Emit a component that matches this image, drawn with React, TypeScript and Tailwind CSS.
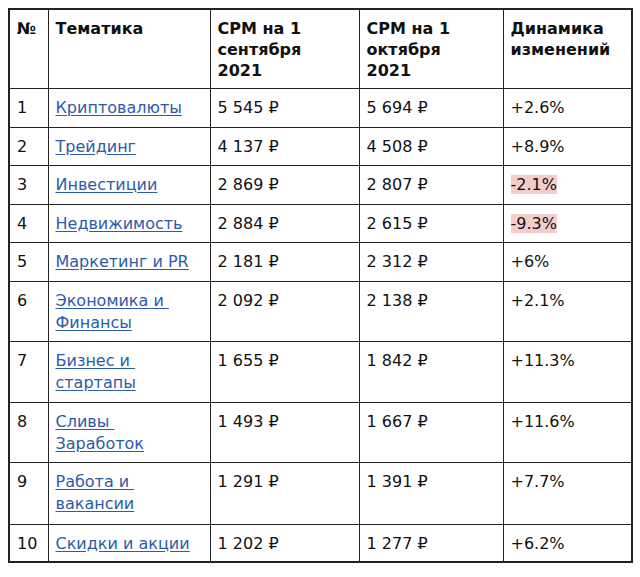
import React from 'react'

interface Row {
  n: number
  topic: string[]
  sep: string
  oct: string
  delta: string
  h: string
  negative?: boolean
}

// CPM by topic, Sep vs Oct 2021
const ROWS: Row[] = [
  { n: 1, topic: ['Криптовалюты'], sep: '5 545 ₽', oct: '5 694 ₽', delta: '+2.6%', h: 'h-[39px]' },
  { n: 2, topic: ['Трейдинг'], sep: '4 137 ₽', oct: '4 508 ₽', delta: '+8.9%', h: 'h-[38px]' },
  { n: 3, topic: ['Инвестиции'], sep: '2 869 ₽', oct: '2 807 ₽', delta: '-2.1%', h: 'h-[39px]', negative: true },
  { n: 4, topic: ['Недвижимость'], sep: '2 884 ₽', oct: '2 615 ₽', delta: '-9.3%', h: 'h-[38px]', negative: true },
  { n: 5, topic: ['Маркетинг и PR'], sep: '2 181 ₽', oct: '2 312 ₽', delta: '+6%', h: 'h-[39px]' },
  { n: 6, topic: ['Экономика и\u00a0', 'Финансы'], sep: '2 092 ₽', oct: '2 138 ₽', delta: '+2.1%', h: 'h-[60px]' },
  { n: 7, topic: ['Бизнес и\u00a0', 'стартапы'], sep: '1 655 ₽', oct: '1 842 ₽', delta: '+11.3%', h: 'h-[61px]' },
  { n: 8, topic: ['Сливы\u00a0', 'Заработок'], sep: '1 493 ₽', oct: '1 667 ₽', delta: '+11.6%', h: 'h-[60px]' },
  { n: 9, topic: ['Работа и\u00a0', 'вакансии'], sep: '1 291 ₽', oct: '1 391 ₽', delta: '+7.7%', h: 'h-[62px]' },
  { n: 10, topic: ['Скидки и акции'], sep: '1 202 ₽', oct: '1 277 ₽', delta: '+6.2%', h: 'h-[38px]' }
]

const HEADERS: string[][] = [
  ['№'],
  ['Тематика'],
  ['CPM на 1', 'сентября', '2021'],
  ['CPM на 1', 'октября', '2021'],
  ['Динамика', 'изменений']
]

const cell = 'border border-[#222] align-top pl-[7px] pr-[4px] pt-[8px] pb-0'

export default function App() {
  return (
    <div className="min-h-[577px] bg-white pt-[8px] pl-[8px] font-['DejaVu_Sans',Verdana,sans-serif] text-[16px] text-[#111]">
      <table className="w-[623px] table-fixed border-collapse border-2 border-[#222]">
        <colgroup>
          <col className="w-[39px]" />
          <col className="w-[162px]" />
          <col className="w-[149px]" />
          <col className="w-[144px]" />
          <col className="w-[129px]" />
        </colgroup>
        <thead>
          <tr className="h-[79px]">
            {HEADERS.map((lines, i) => (
              <th key={i} className={`${cell} pt-[7px] text-left font-bold leading-[21px]`}>
                {lines.map(l => (
                  <div key={l}>{l}</div>
                ))}
              </th>
            ))}
          </tr>
        </thead>
        <tbody className="leading-[22px]">
          {ROWS.map(row => (
            <tr key={row.n} className={row.h}>
              <td className={cell}>{row.n}</td>
              <td className={cell}>
                {row.topic.map((line, i) => (
                  <div key={i}>
                    <a href="#" className="text-[#2b5ca8] underline underline-offset-2">
                      {line}
                    </a>
                  </div>
                ))}
              </td>
              <td className={cell}>{row.sep}</td>
              <td className={cell}>{row.oct}</td>
              <td className={cell}>
                {row.negative ? <span className="bg-[#f4cccc]">{row.delta}</span> : row.delta}
              </td>
            </tr>
          ))}
        </tbody>
      </table>
    </div>
  )
}
